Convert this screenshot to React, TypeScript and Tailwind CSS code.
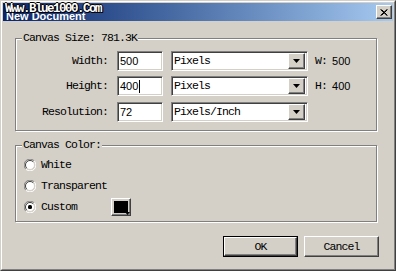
import React from "react";

const raised =
  "border border-t-white border-l-white border-r-[#404040] border-b-[#404040] shadow-[inset_-1px_-1px_0_#808080] bg-[#d4d0c8]";
const sunken =
  "border border-t-[#808080] border-l-[#808080] border-r-white border-b-white shadow-[inset_1px_1px_0_#404040,inset_-1px_-1px_0_#d4d0c8] bg-white";
const mono = "font-['Liberation_Mono',monospace] text-[11.5px] tracking-[-0.9px] leading-[12px] text-black";
const sans = "font-['Liberation_Sans',Arial,sans-serif] text-[11px] leading-[12px] text-black";

function Arrow() {
  return (
    <svg width="7" height="4" viewBox="0 0 7 4">
      <path d="M0 0H7L3.5 4Z" fill="#000" />
    </svg>
  );
}

function Select({ value }: { value: string }) {
  return (
    <div className={`${sunken} w-[137px] h-[20px] flex items-center pl-[2px] pr-[2px]`}>
      <span className={`${mono} flex-1`}>{value}</span>
      <div className={`${raised} w-[17px] h-[16px] flex items-center justify-center`}>
        <Arrow />
      </div>
    </div>
  );
}

function Group({ title, className, children }: { title: string; className: string; children: React.ReactNode }) {
  return (
    <div className={`relative border border-[#808080] shadow-[inset_1px_1px_0_#fff,1px_1px_0_#fff] ${className}`}>
      <span className={`absolute left-[6px] top-[-7px] bg-[#d4d0c8] px-[1px] ${mono}`}>{title}</span>
      {children}
    </div>
  );
}

function Row({ label, value, unit, extra, cursor, className }: { label: string; value: string; unit: string; extra?: React.ReactNode; cursor?: boolean; className?: string }) {
  return (
    <div className={`flex items-center h-[20px] ${className ?? ""}`}>
      <span className={`${mono} w-[92px] text-right`}>{label}</span>
      <div className={`${sunken} ml-[9px] w-[46px] h-[20px] flex items-center pl-[2px]`}>
        <span className={sans}>{value}</span>
        {cursor && <span className="ml-[1px] w-[1px] h-[13px] bg-black" />}
      </div>
      <div className="ml-[8px]">
        <Select value={unit} />
      </div>
      {extra && <div className="ml-[7px] flex items-center">{extra}</div>}
    </div>
  );
}

function Radio({ checked }: { checked?: boolean }) {
  return (
    <svg width="12" height="12" viewBox="0 0 12 12">
      <circle cx="6" cy="6" r="4.5" fill="#fff" />
      <path d="M10.2 1.8A5.5 5.5 0 0 0 1.8 10.2" stroke="#808080" strokeWidth="1" fill="none" />
      <path d="M9.2 2.8A4.5 4.5 0 0 0 2.8 9.2" stroke="#404040" strokeWidth="1" fill="none" />
      <path d="M2.8 9.2A4.5 4.5 0 0 0 9.2 2.8" stroke="#d4d0c8" strokeWidth="1" fill="none" />
      <path d="M1.8 10.2A5.5 5.5 0 0 0 10.2 1.8" stroke="#fff" strokeWidth="1" fill="none" />
      {checked && <rect x="4" y="4" width="4" height="4" rx="1.5" fill="#000" />}
    </svg>
  );
}

function RadioRow({ label, checked, className, children }: { label: string; checked?: boolean; className?: string; children?: React.ReactNode }) {
  return (
    <div className={`flex items-center h-[12px] ${className ?? ""}`}>
      <Radio checked={checked} />
      <span className={`${mono} ml-[5px] w-[70px]`}>{label}</span>
      {children}
    </div>
  );
}

export default function App() {
  return (
    <div className="w-[396px] h-[271px] bg-[#d4d0c8] border border-t-[#d4d0c8] border-l-[#d4d0c8] border-r-[#404040] border-b-[#404040]">
      <div className="w-full h-full border border-t-white border-l-white border-r-[#808080] border-b-[#808080] p-[1px] flex flex-col">
        {/* title bar */}
        <div className="relative h-[18px] bg-gradient-to-r from-[#0a246a] to-[#a6caf0] flex items-center pl-[3px] pr-[1px]">
          <span className="font-['Liberation_Sans',Arial,sans-serif] text-[11px] font-bold text-white leading-[12px] mt-[7px]">New Document</span>
          <span className="absolute left-[2px] top-[0px] font-['Liberation_Mono',monospace] font-bold text-[12.5px] tracking-[-1.5px] leading-[13px] text-white [text-shadow:1px_0_0_#000,-1px_0_0_#000,0_1px_0_#000,0_-1px_0_#000,1px_1px_0_#000]">
            Www.Blue1000.Com
          </span>
          <div className="flex-1" />
          <div className={`${raised} w-[16px] h-[14px] flex items-center justify-center`}>
            <svg width="8" height="7" viewBox="0 0 8 7">
              <path d="M0.5 0.5L7 6.5M1.5 0.5L7.5 6.5M7 0.5L0.5 6.5M7.5 0.5L1.5 6.5" stroke="#000" strokeWidth="1" />
            </svg>
          </div>
        </div>

        <div className="flex flex-col pl-[12px]">
          <Group title="Canvas Size: 781.3K" className="mt-[17px] w-[362px] h-[93px] pt-[12px]">
            <Row
              label="Width:"
              value="500"
              unit="Pixels"
              extra={
                <>
                  <span className={mono}>W:</span>
                  <span className={`${sans} ml-[5px]`}>500</span>
                </>
              }
            />
            <Row
              className="mt-[5px]"
              label="Height:"
              value="400"
              unit="Pixels"
              cursor
              extra={
                <>
                  <span className={mono}>H:</span>
                  <span className={`${sans} ml-[5px]`}>400</span>
                </>
              }
            />
            <Row className="mt-[6px]" label="Resolution:" value="72" unit="Pixels/Inch" />
          </Group>

          <Group title="Canvas Color:" className="mt-[14px] w-[362px] h-[77px] pt-[13px] pl-[8px]">
            <RadioRow label="White" />
            <RadioRow label="Transparent" className="mt-[9px]" />
            <RadioRow label="Custom" checked className="mt-[9px]">
              <div className={`${raised} relative w-[20px] h-[18px] flex items-center justify-center`}>
                <div className="w-[14px] h-[12px] bg-black" />
                <svg className="absolute right-[0px] bottom-[0px]" width="5" height="3" viewBox="0 0 5 3">
                  <path d="M0 0H5L2.5 3Z" fill="#000" />
                </svg>
              </div>
            </RadioRow>
          </Group>

          <div className="flex justify-end mt-[14px] mr-[14px] gap-[6px]">
            <div className="w-[75px] h-[21px] border border-black">
              <div className={`${raised} w-full h-full flex items-center justify-center`}>
                <span className={mono}>OK</span>
              </div>
            </div>
            <div className={`${raised} w-[75px] h-[21px] flex items-center justify-center`}>
              <span className={mono}>Cancel</span>
            </div>
          </div>
        </div>
      </div>
    </div>
  );
}
